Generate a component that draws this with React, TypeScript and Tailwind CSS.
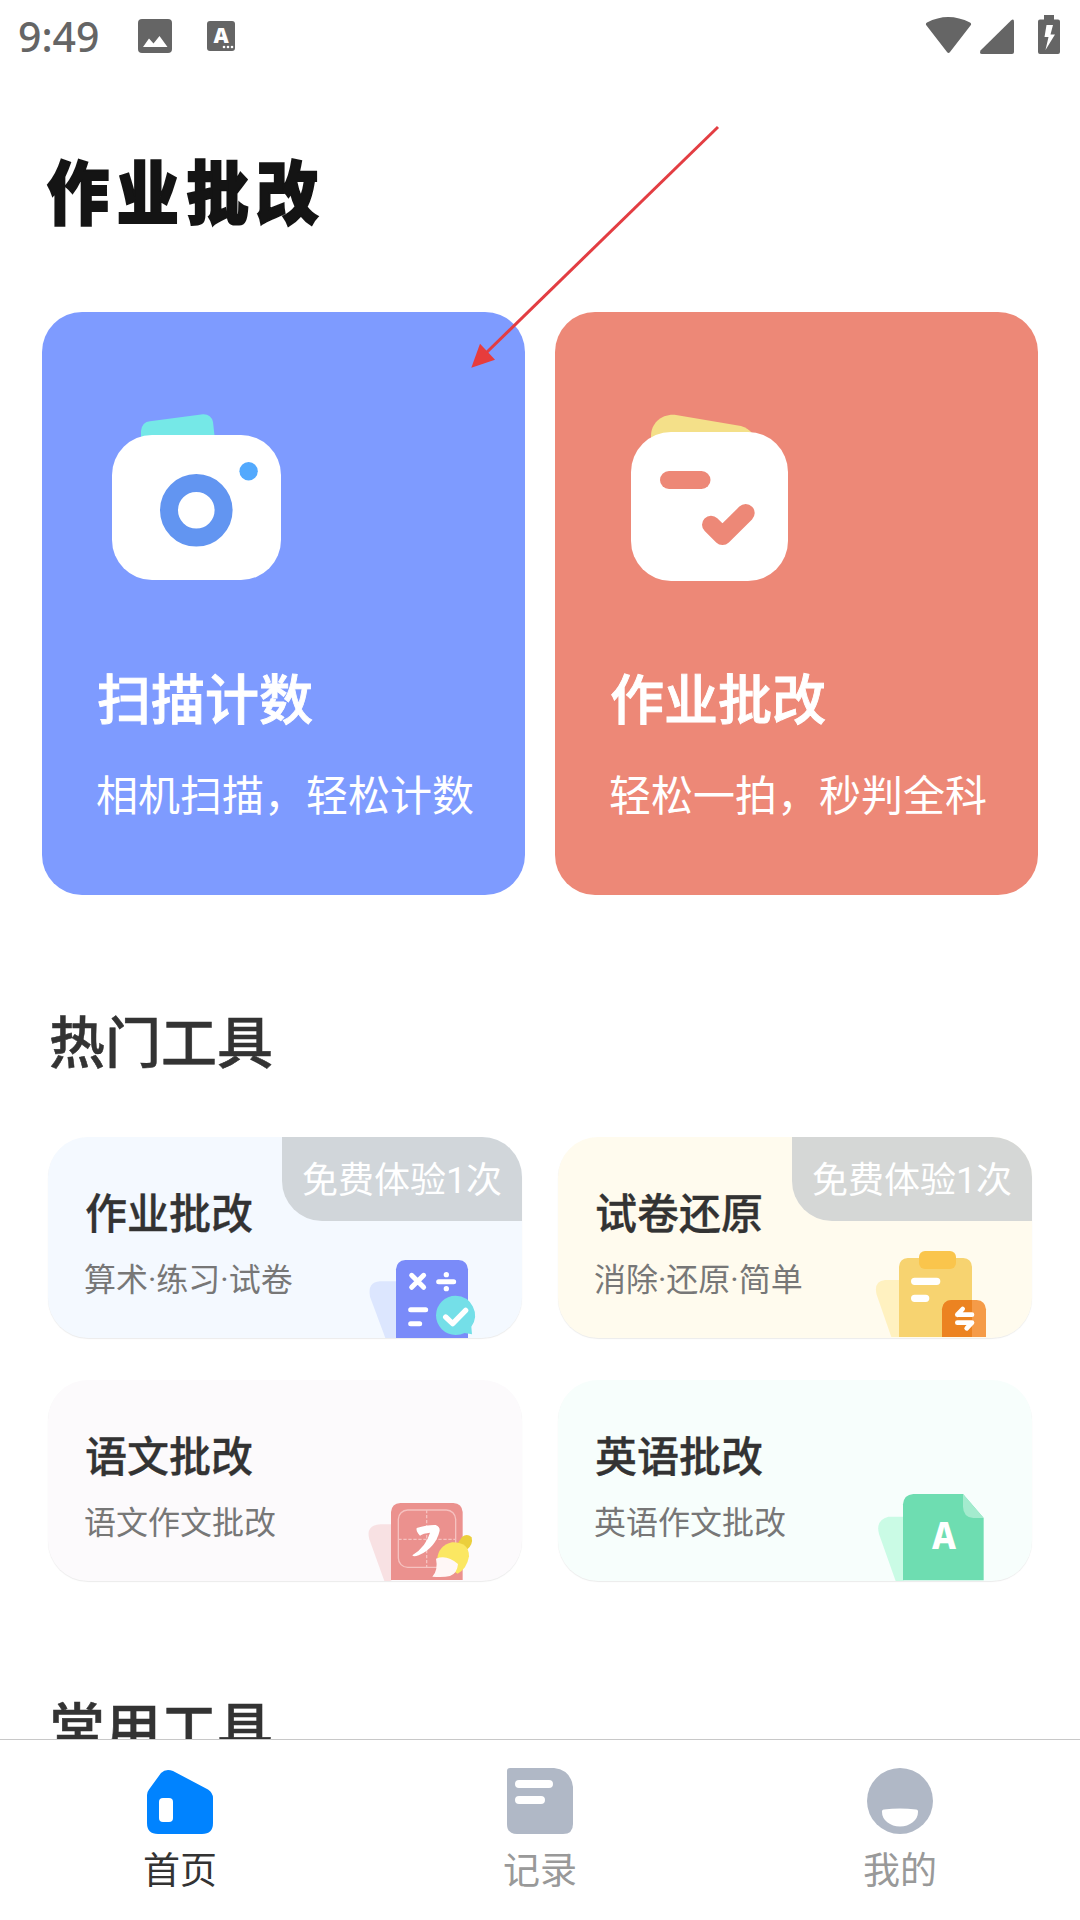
import { ReactNode } from 'react'

interface FeatureCardProps {
  title: string
  description: string
  className: string
  icon: ReactNode
}

interface ToolCardProps {
  title: string
  description: string
  className: string
  icon: ReactNode
  badge?: string
  badgeClassName?: string
}

interface NavItemProps {
  label: string
  icon: ReactNode
  active?: boolean
}

const StatusBar = () => (
  <header className="flex h-[74px] shrink-0 items-start justify-between pr-[20px] pl-[18px] text-[#656565]">
    <div className="flex items-start">
      <span className="w-[120px] pt-[12px] font-['Noto_Sans'] text-[41px] leading-[48px] font-medium">
        9:49
      </span>
      <svg className="mt-[19px] h-[34px] w-[34px]" viewBox="0 0 34 34">
        <rect width="34" height="34" rx="4" fill="currentColor" />
        <path d="M5 28 11 19.5 15.5 24.5 21.5 17 29.500 28Z" fill="#fff" />
      </svg>
      <span className="relative mt-[21px] ml-[35px] flex h-[30px] w-[28px] justify-center rounded-[3px] bg-[#656565] font-['Open_Sans'] text-[21px] leading-[29px] font-extrabold text-white">
        A
        <svg className="absolute right-[1.500px] bottom-[2px]" width="12" height="4">
          <circle cx="2" cy="2" r="1.300" fill="#fff" />
          <circle cx="6" cy="2" r="1.300" fill="#fff" />
          <circle cx="10" cy="2" r="1.300" fill="#fff" />
        </svg>
      </span>
    </div>
    <svg className="mt-[15px]" width="135" height="40" viewBox="925 15 135 40" fill="currentColor">
      <path d="M926.500 25.500Q925 23.500 927 22.500Q948 11.500 970 22.500Q972 23.500 970.500 25.500L950 52Q948.500 54 947 52Z" />
      <path d="M1011 20.500Q1014 18 1014 22V52Q1014 54 1012 54H982Q979 54 980.500 50.500Z" />
      <path
        fillRule="evenodd"
        d="M1044 15H1054V19.500H1058Q1060 19.500 1060 21.500V52Q1060 54 1058 54H1040Q1038 54 1038 52V21.500Q1038 19.500 1040 19.500H1044ZM1046.500 25 1044.500 37H1048.500L1045.500 50 1055 34.500H1050.500L1053 25Z"
      />
    </svg>
  </header>
)

const CameraIcon = () => (
  <svg width="180" height="180" viewBox="107 405 180 180">
    <path d="M141 440V431Q142 422 150 421.300L203 414.300Q211 414 213 422L215 440Z" fill="#75e8e7" />
    <rect x="112" y="435" width="169" height="145" rx="40" fill="#fff" />
    <circle cx="196.300" cy="510.300" r="27.300" fill="none" stroke="#6295f1" strokeWidth="18" />
    <circle cx="248.600" cy="471.300" r="9.200" fill="#53a9fd" />
  </svg>
)

const CheckPaperIcon = () => (
  <svg width="180" height="180" viewBox="620 405 180 180">
    <path d="M651 440V436C651 423 662 413.500 676 415L741 426Q748 428 753 434V440Z" fill="#f4e089" />
    <rect x="631" y="432" width="157" height="149" rx="40" fill="#fff" />
    <rect x="660" y="471" width="50.500" height="18" rx="9" fill="#ed8877" />
    <path
      d="M711 524.700 722.500 536 745.700 513"
      fill="none"
      stroke="#ed8877"
      strokeWidth="18"
      strokeLinecap="round"
      strokeLinejoin="round"
    />
  </svg>
)

const CalculatorIcon = () => (
  <svg width="120" height="90" viewBox="1002 384 360 270">
    <path d="M1100 484H1050Q1012 486 1020 530L1066 654H1100Z" fill="#dce6fe" />
    <path d="M1098 654V448Q1100 422 1126 420H1286Q1312 422 1314 448V654Z" fill="#7a8bf9" />
    <g stroke="#fff" strokeWidth="15" strokeLinecap="round">
      <path d="M1145 466 1181 502M1181 466 1145 502M1226 485H1271M1142 569H1187M1142 611H1169" />
    </g>
    <circle cx="1249" cy="464" r="8" fill="#fff" />
    <circle cx="1249" cy="506" r="8" fill="#fff" />
    <path d="M1277 527A59 59 0 1 0 1277 645Q1292 645 1304 639L1326 643 1324 620A59 59 0 0 0 1277 527Z" fill="#74dfe8" />
    <path
      d="M1247 591 1268 611 1307 571"
      fill="none"
      stroke="#fff"
      strokeWidth="16"
      strokeLinecap="round"
      strokeLinejoin="round"
    />
  </svg>
)

const ClipboardIcon = () => (
  <svg width="120" height="90" viewBox="1002 384 360 270">
    <path d="M1078 480H1035Q1000 484 1010 524L1054 651H1078Z" fill="#fff1c0" />
    <path d="M1077 651V440Q1079 416 1103 414H1270Q1294 416 1296 440V651Z" fill="#f7d370" />
    <rect x="1137" y="393" width="111" height="54" rx="18" fill="#fac54c" />
    <path d="M1124 484H1190M1124 535H1157" stroke="#fff" strokeWidth="22" strokeLinecap="round" />
    <path d="M1206 651V568Q1208 542 1234 540H1310Q1336 542 1338 568V651Z" fill="#f59b48" />
    <path d="M1206 651V568Q1208 542 1234 540H1296V651Z" fill="#ec8321" />
    <path
      d="M1252 584H1296M1252 584 1268 567M1252 608H1296M1296 608 1280 625"
      stroke="#fff"
      strokeWidth="14"
      strokeLinecap="round"
    />
  </svg>
)

const CalligraphyIcon = () => (
  <svg width="120" height="90" viewBox="1002 363 360 270">
    <path d="M1084 463H1052Q1006 466 1018 508L1063 633H1084Z" fill="#f8e1e3" />
    <path d="M1083 630V426Q1085 401 1111 399H1270Q1296 401 1298 426V630Z" fill="#eb918e" />
    <g fill="none" stroke="#f6c2c0" strokeWidth="4">
      <rect x="1105" y="420" width="172" height="172" rx="28" />
      <path d="M1105 508H1277M1190 420V592" strokeDasharray="10 5" />
    </g>
    <path
      d="M1160 474Q1157 484 1170 497Q1179 490 1200 488Q1188 530 1147 556Q1150 562 1166 556Q1217 533 1229 482Q1230 470 1217 465Q1192 464 1160 474Z"
      fill="#fff"
    />
    <path d="M1284 519 1296 501Q1311 488 1325 502Q1330 523 1312 538Z" fill="#ebcf3c" />
    <path d="M1221 570Q1225 526 1266 517Q1317 516 1317 559Q1311 596 1283 611Z" fill="#fbe762" />
    <path d="M1218 566Q1250 552 1284 582Q1282 610 1260 618Q1240 623 1207 620Q1225 600 1218 566Z" fill="#fff7f6" />
  </svg>
)

const EnglishPaperIcon = () => (
  <svg width="120" height="90" viewBox="1002 363 360 270">
    <path d="M1090 440H1045Q1006 450 1017 492L1067 633H1090Z" fill="#cafbe5" />
    <path d="M1089 631V403Q1091 374 1120 372H1269L1331 444V631Z" fill="#6eddb1" />
    <path d="M1269 372V410Q1270 442 1300 444H1331Z" fill="#a4ebce" />
    <text
      x="1212"
      y="538"
      textAnchor="middle"
      textLength="72"
      lengthAdjust="spacingAndGlyphs"
      fill="#fff"
      className="font-['Noto_Sans'] text-[114px] font-extrabold"
    >
      A
    </text>
  </svg>
)

const HomeIcon = () => (
  <svg width="66" height="66" viewBox="147 1768 66 66">
    <path
      d="M161 1773Q166 1768 173 1771L208 1789.500Q213 1793 213 1798V1823Q213 1834 202 1834H158Q147 1834 147 1823V1795Q147 1792 149 1789.500Z"
      fill="#0083ff"
    />
    <rect x="159" y="1798" width="14" height="24" rx="4" fill="#fff" />
  </svg>
)

const RecordIcon = () => (
  <svg width="66" height="66" viewBox="0 0 66 66">
    <path d="M3 0H47Q64 2 66 19V56Q66 66 56 66H10Q0 66 0 56V3Q0 0 3 0Z" fill="#b0b8c6" />
    <path d="M12 16H42M12 32H34" stroke="#fff" strokeWidth="8" strokeLinecap="round" />
  </svg>
)

const ProfileIcon = () => (
  <svg width="66" height="66" viewBox="0 0 66 66">
    <circle cx="33" cy="33" r="33" fill="#b0b8c6" />
    <path d="M15 44Q14.500 42 17 41.500Q33 39.500 49 41.500Q51.500 42 51 44A18 14.500 0 0 1 15 44Z" fill="#fff" />
  </svg>
)

const FeatureCard = ({ title, description, className, icon }: FeatureCardProps) => (
  <div className={`flex h-[583px] w-[483px] flex-col rounded-[40px] pt-[93px] text-white ${className}`}>
    <div className="ml-[65px] h-[180px]">{icon}</div>
    <h2 className="mt-[77px] ml-[55px] text-[54px] leading-[80px] font-medium [-webkit-text-stroke:0.9px]">
      {title}
    </h2>
    <p className="mt-[25px] ml-[54px] text-[42px] leading-[60px]">{description}</p>
  </div>
)

const ToolCard = ({ title, description, className, icon, badge, badgeClassName }: ToolCardProps) => (
  <div
    className={`relative flex h-[201px] w-[474px] justify-between overflow-hidden rounded-[40px] ${className}`}
  >
    <div className="pt-[48px] pl-[37px]">
      <h3 className="text-[42px] leading-[60px] font-medium text-[#333] [-webkit-text-stroke:0.3px]">
        {title}
      </h3>
      <p className="mt-[12px] ml-[-1px] text-[32px] leading-[46px] text-[#777]">{description}</p>
    </div>
    <div className="mr-[38px] self-end">{icon}</div>
    {badge && (
      <span
        className={`absolute top-0 right-0 flex h-[84px] w-[240px] items-center justify-center rounded-bl-[40px] pt-[4px] text-[36px] text-white ${badgeClassName}`}
      >
        {badge}
      </span>
    )}
  </div>
)

const NavItem = ({ label, icon, active }: NavItemProps) => (
  <button className="flex flex-1 flex-col items-center pt-[28px]">
    {icon}
    <span
      className={`mt-[12px] text-[37px] leading-[52px] ${active ? 'text-[#333]' : 'text-[#999]'}`}
    >
      {label}
    </span>
  </button>
)

export default function App() {
  return (
    <div
      lang="zh-CN"
      className="relative flex h-[1920px] w-[1080px] flex-col overflow-hidden bg-white font-[Roboto,'Noto_Sans_CJK_SC',sans-serif]"
    >
      <StatusBar />

      <main className="min-h-0 flex-1 overflow-hidden">
        <h1 className="ml-[47px] h-[238px] w-fit origin-left scale-x-90 pt-[72px] text-[69px] leading-[100px] font-black tracking-[8.500px] text-[#141414] [-webkit-text-stroke:2px_#141414]">
          作业批改
        </h1>

        <section className="flex gap-[30px] pl-[42px]">
          <FeatureCard
            title="扫描计数"
            description="相机扫描，轻松计数"
            className="bg-[#7e9bff]"
            icon={<CameraIcon />}
          />
          <FeatureCard
            title="作业批改"
            description="轻松一拍，秒判全科"
            className="bg-[#ed8877]"
            icon={<CheckPaperIcon />}
          />
        </section>

        <section className="px-[48px] pt-[109px]">
          <h2 className="ml-[1px] text-[56px] leading-[80px] font-medium text-[#333] [-webkit-text-stroke:0.5px]">
            热门工具
          </h2>
          <div className="mt-[53px] grid grid-cols-2 gap-x-[36px] gap-y-[42px]">
            <ToolCard
              title="作业批改"
              description="算术·练习·试卷"
              className="bg-[#f4f9ff] shadow-[0_1px_1px_rgba(0,0,0,0.08)]"
              badge="免费体验1次"
              badgeClassName="bg-[#d1d6da]"
              icon={<CalculatorIcon />}
            />
            <ToolCard
              title="试卷还原"
              description="消除·还原·简单"
              className="bg-[#fffbee] shadow-[0_1px_1px_rgba(0,0,0,0.08)]"
              badge="免费体验1次"
              badgeClassName="bg-[#d5d7d6]"
              icon={<ClipboardIcon />}
            />
            <ToolCard
              title="语文批改"
              description="语文作文批改"
              className="bg-[#fcfafc] shadow-[0_1px_1px_rgba(0,0,0,0.08)]"
              icon={<CalligraphyIcon />}
            />
            <ToolCard
              title="英语批改"
              description="英语作文批改"
              className="bg-[#f7fefc] shadow-[0_1px_1px_rgba(0,0,0,0.08)]"
              icon={<EnglishPaperIcon />}
            />
          </div>
        </section>

        <section className="px-[48px] pt-[109px]">
          <h2 className="ml-[1px] text-[56px] leading-[80px] font-medium text-[#333] [-webkit-text-stroke:0.5px]">
            常用工具
          </h2>
        </section>
      </main>

      <nav className="flex h-[181px] shrink-0 border-t border-[#c8c8c8] bg-white">
        <NavItem label="首页" icon={<HomeIcon />} active />
        <NavItem label="记录" icon={<RecordIcon />} />
        <NavItem label="我的" icon={<ProfileIcon />} />
      </nav>

      {/* pointer to the scan card */}
      <svg
        className="pointer-events-none absolute top-[120px] left-[465px]"
        width="260"
        height="255"
        viewBox="465 120 260 255"
      >
        <path d="M718 127 486 353" stroke="#e33d42" strokeWidth="3" />
        <path d="M471.300 367.700 480 343.700 495 359.700Z" fill="#e73c3c" />
      </svg>
    </div>
  )
}
